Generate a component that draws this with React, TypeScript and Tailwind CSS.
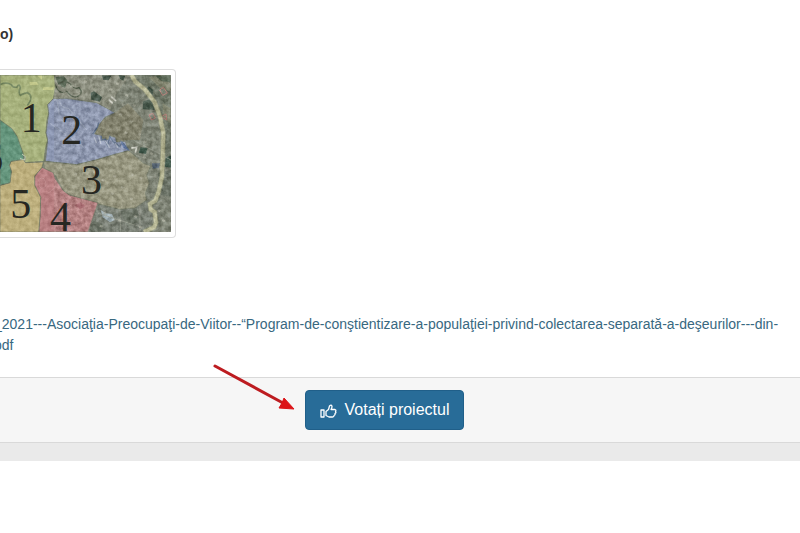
const districts = [
  { id: 1, x: 62, y: 215, fill: '#a9b57b', d: 'M0 45H163L166 82L160 116L143 134L146 160L140 185L138 218L143 240L136 268L132 304L74 308L76 292L66 284L58 255L36 218L0 180Z' },
  { id: 2, x: 184, y: 253, fill: '#8b97b8', d: 'M160 116L198 115L290 128L345 158L315 172L296 196L284 222L304 226L306 240L326 238L330 228L346 232L350 246L376 244L386 272L340 284L288 300L230 314L136 304L143 240L138 218L146 160L143 134Z' },
  { id: 3, x: 243, y: 402, fill: '#98977e', d: 'M130 304L230 314L288 300L386 272L408 290L430 310L452 318L440 345L448 370L436 398L440 420L405 444L360 448L296 432L208 405L190 392L166 346L134 326Z' },
  { id: 4, x: 150, y: 514, fill: '#bd7d81', d: 'M104 348L126 322L160 338L166 356L190 392L208 405L294 428L264 516H116L120 470L122 412L104 376Z' },
  { id: 5, x: 31, y: 474, fill: '#c2b27b', d: 'M33 304L70 298L76 308L130 306L126 322L104 348L104 376L122 412L120 470L116 516H0V376L30 368L34 334L28 316Z' },
  { id: 6, x: -54, y: 336, fill: '#5f967c', d: 'M0 180L36 206L52 230L70 282L72 298L33 304L28 316L34 334L30 368L0 376Z' },
];

const roofs = [
  [176, 72], [192, 92], [214, 74], [235, 98], [254, 61], [276, 82], [304, 70],
  [330, 84], [350, 67], [378, 101], [367, 130], [400, 132], [360, 158],
  [391, 180], [416, 218], [433, 241], [376, 214], [452, 276], [430, 288],
  [281, 333], [306, 356], [342, 344], [364, 377], [334, 397], [395, 340],
  [392, 412], [284, 388], [420, 350], [225, 337], [312, 455], [356, 477],
  [405, 465], [474, 448], [488, 478], [420, 497], [301, 494],
];

const DistrictMap = () => (
  <svg
    className="block h-[157px] w-[171px]"
    viewBox="0 45 513 471"
    role="img"
    aria-label="Districts"
  >
    <defs>
      <filter id="terrain" x="0" y="0" width="100%" height="100%" colorInterpolationFilters="sRGB">
        <feTurbulence type="fractalNoise" baseFrequency="0.07" numOctaves="4" seed="23" />
        <feColorMatrix values="1.6 0 0 0 -0.2  1.6 0 0 0 -0.2  1.6 0 0 0 -0.25  0 0 0 0 1" />
      </filter>
    </defs>
    <rect y="45" width="513" height="471" fill="#787e70" />

    {/* fields and woods around the city */}
    <path d="M163 45H390L350 100L330 150L240 120L160 116Z" fill="#8b8e7e" />
    <path d="M345 158L384 130L430 180L420 240L380 240L350 246L326 238L284 222L300 186Z" fill="#7d7c66" />
    <path d="M400 45H513V290H494L490 190L455 115Z" fill="#667060" />
    <path d="M446 52L484 45L513 72V94L480 84ZM488 130L512 145V190L490 176Z" fill="#7c8069" />
    <path d="M272 98L282 94L306 112L300 125L274 119ZM430 124L454 116L472 150L428 148ZM444 78L460 90L458 104L440 94ZM306 46L334 47L326 61L309 59ZM356 45L376 48L370 62L360 57Z" fill="#34483c" />
    <path d="M166 52L190 48L202 61L195 84L175 74ZM466 48L510 46V66L486 64Z" fill="#4b5c49" />
    <path d="M498 292L513 287V323L494 320ZM422 262L442 264L438 282L416 278Z" fill="#2c493c" />
    <path d="M456 310L480 310L476 324L458 326Z" fill="#44566b" />
    <path d="M294 432L360 448L405 444L440 420L448 430L460 476L436 516H264Z" fill="#737a70" />
    <path d="M302 450L318 460L336 462L344 480L330 487L308 472Z" fill="#a3b5be" />
    <path d="M360 454L410 448L420 482L382 500ZM472 340L513 330V410L482 405ZM275 480L310 492L302 516H267Z" fill="#626b5f" />
    <path d="M479 90L490 82L502 99L488 106ZM447 165L458 160L466 174L455 180ZM484 170L498 162L500 180Z" fill="none" stroke="#b97873" strokeWidth="3" />
    <path d="M166 74Q176 106 200 94Q218 118 236 108Q251 96 237 83Q222 90 211 72Q194 58 180 70" fill="none" stroke="#414e3c" strokeWidth="4" />
    <path d="M400 240L513 300M408 286L496 312M430 350L500 352M360 450L362 516M294 460L420 500M420 430V516" fill="none" stroke="#9a9f91" strokeWidth="2" />

    {districts.map((district) => (
      <path key={district.id} d={district.d} fill={district.fill} stroke="#66705c" strokeWidth="2" />
    ))}

    {/* river, lakes and main streets */}
    <path d="M0 74Q18 65 34 74Q38 84 51 81Q58 68 61 84Q54 97 61 106Q76 98 83 98Q96 104 91 122L82 137" fill="none" stroke="#71855b" strokeWidth="5" />
    <path d="M278 222L292 202L296 188M304 228V240L316 238L322 256L330 230L340 245L360 260L366 246L388 272" fill="none" stroke="#53688a" strokeWidth="4" />
    <path d="M360 240L374 256L386 271L370 263Z" fill="#5a76ad" />
    <path d="M282 232L290 250M296 229L303 252M316 242L330 264M346 250L354 264" fill="none" stroke="#b3bdd2" strokeWidth="4" />
    <path d="M148 142Q160 110 179 124Q184 146 205 145M172 124L178 166M150 190L250 260M206 145L260 210" fill="none" stroke="#a0abc5" strokeWidth="3" />
    <path d="M118 370Q112 350 132 356Q145 380 129 384Q116 386 118 370M190 410L214 440M144 400L166 382" fill="none" stroke="#cb9093" strokeWidth="3" />
    <path d="M224 436L242 426L256 438L240 448Z" fill="#a95e68" />
    <path d="M88 66H110L116 74L90 76ZM130 82H160V90H128ZM112 47H126V59Z" fill="#cbd18e" />
    <path d="M66 282L76 290L74 300L60 296" fill="none" stroke="#c7d4ba" strokeWidth="3" />
    {roofs.map(([x, y]) => (
      <path key={`${x}-${y}`} d={`M${x} ${y}l8 3l-3 6l-8 -3Z`} fill="#c5c5b5" opacity="0.5" />
    ))}
    <path d="M334 110L348 123M326 118L338 130M404 68L424 82M394 264L410 262L406 278" fill="none" stroke="#d6d7ce" strokeWidth="5" />

    {/* ring road */}
    <path d="M394 45L406 65L434 88L463 125L480 170L490 220L488 295L486 350L476 395L466 422L450 432L452 448L464 456L468 488L462 502L432 516" fill="none" stroke="#8d9275" strokeWidth="15" />
    <path d="M394 45L406 65L434 88L463 125L480 170L490 220L488 295L486 350L476 395L466 422L450 432L452 448L464 456L468 488L462 502L432 516" fill="none" stroke="#bdbd96" strokeWidth="11" />

    <rect y="45" width="513" height="471" filter="url(#terrain)" opacity="0.12" />
    <rect x="163" y="45" width="350" height="471" filter="url(#terrain)" opacity="0.1" />

    {districts.map((district) => (
      <text
        key={district.id}
        x={district.x}
        y={district.y}
        fontSize="126"
        fontFamily="'Liberation Serif', serif"
        fill="#262722"
      >
        {district.id}
      </text>
    ))}
  </svg>
);

const ThumbIcon = () => (
  <svg
    className="h-4 w-[17px]"
    viewBox="0 0 34 32"
    fill="none"
    stroke="currentColor"
    strokeWidth="2.6"
    strokeLinejoin="round"
    aria-hidden="true"
  >
    <path d="M2 16H8V30H2Z" />
    <path d="M12 19L17 15L19 8Q23 4 24 9Q24 12 22 15H30Q33 16 31 19Q33 21 30 23Q31 26 28 27Q28 30 25 30H18L12 27Z" />
  </svg>
);

const App = () => {
  return (
    <div className="overflow-x-hidden bg-white font-['Liberation_Sans',sans-serif] text-sm text-[#333]">
      <main className="-ml-1.5 pt-6">
        <h2 className="pl-1.5 leading-5 font-bold">o)</h2>

        <div className="mt-[25px] ml-1.5 w-fit rounded-r border border-l-0 border-[#ddd] py-[5px] pr-1">
          <DistrictMap />
        </div>

        <a
          href="#document"
          className="mt-[76px] block leading-[21px] whitespace-nowrap text-[#38687f]"
        >
          _2021---Asociaţia-Preocupaţi-de-Viitor--“Program-de-conştientizare-a-populaţiei-privind-colectarea-separată-a-deşeurilor---din-
          <br />
          pdf
        </a>
      </main>

      <footer className="relative mt-[21px] border-y border-[#d9d9d9] bg-[#f6f6f6] py-3">
        <div className="flex justify-center pr-[31px]">
          <button
            type="button"
            className="flex h-10 items-center gap-2 rounded border border-[#205f89] bg-[#286c98] px-3.5 text-base text-white"
          >
            <ThumbIcon />
            Votați proiectul
          </button>
        </div>

        <svg
          className="absolute -top-4 left-[210px] h-14 w-[90px]"
          viewBox="0 0 90 56"
          aria-hidden="true"
        >
          <path d="M5 4L73 41" stroke="#bd1c20" strokeWidth="3" strokeLinecap="round" />
          <path d="M84 47L69 46L72 41L74 36Z" fill="#dc1418" stroke="#dc1418" strokeWidth="1" />
        </svg>
      </footer>
      <div className="h-[18px] bg-[#eaeaea]" />
    </div>
  );
};

export default App;
